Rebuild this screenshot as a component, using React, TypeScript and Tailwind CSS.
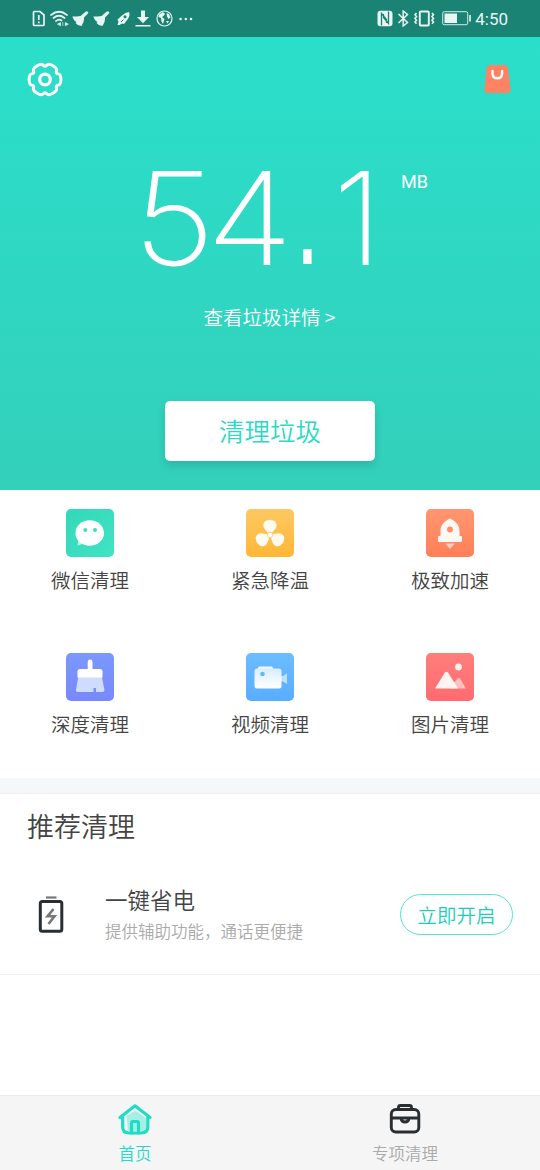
import React from 'react';

interface Tool {
    name: string;
    bg: string;
    icon: React.ReactNode;
}

const tools: Tool[] = [
    {
        name: '微信清理',
        bg: 'bg-linear-to-br from-[#31d9b8] to-[#41e3c4]',
        icon: (
            <>
                <path d="M12.500 29 L11.500 36.500 L20 34Z" fill="#b9f5e6" />
                <ellipse cx="23.700" cy="24" rx="14.300" ry="12.800" fill="#fff" />
                <circle cx="19.300" cy="21" r="2" fill="#3adfc0" />
                <circle cx="29" cy="21" r="2" fill="#3adfc0" />
            </>
        ),
    },
    {
        name: '紧急降温',
        bg: 'bg-linear-to-b from-[#fdc861] to-[#ffb733]',
        icon: (
            <>
                {[0, 120, 240].map((angle) => (
                    <path
                        key={angle}
                        d="M21.500 23.500 L18 19 C16.500 15.500 18 12 21 11.500 Q24 10.200 27 11.500 C30 12 31.500 15.500 30 19 L26.500 23.500Z"
                        fill="#fffaf0"
                        transform={`rotate(${angle} 24 26)`}
                    />
                ))}
                <circle cx="24" cy="26" r="2.700" fill="#fff" stroke="#fdd689" strokeWidth="1" />
            </>
        ),
    },
    {
        name: '极致加速',
        bg: 'bg-linear-to-b from-[#ff9671] to-[#ff7f58]',
        icon: (
            <>
                <path d="M19 34.500 H29 L24 40Z" fill="#ffcbb9" />
                <path
                    d="M24 9.500 C29.500 12 33.500 16 33.500 22 V27 H35 Q36 27 36 28 V32 Q36 33 35 33 H13 Q12 33 12 32 V28 Q12 27 13 27 H14.500 V22 C14.500 16 18.500 12 24 9.500Z"
                    fill="#fff7f2"
                />
                <circle cx="24" cy="20.500" r="2.900" fill="#ff8e69" />
            </>
        ),
    },
    {
        name: '深度清理',
        bg: 'bg-linear-to-b from-[#7b98fb] to-[#7888fd]',
        icon: (
            <>
                <rect x="21.700" y="6.500" width="4.800" height="14" rx="2.400" fill="#fff" />
                <path d="M12.500 22 H35.500 L38.500 37 Q38.500 39 36.500 39 H11.500 Q9.500 39 10 37Z" fill="#cfdcff" />
                <path d="M27.500 39 V35 H30 V39Z" fill="#7b8dfb" />
                <path d="M14 16 H34 Q36.500 16 36.500 18.500 V24.500 H11.500 V18.500 Q11.500 16 14 16Z" fill="#fff" />
            </>
        ),
    },
    {
        name: '视频清理',
        bg: 'bg-linear-to-b from-[#6bbdff] to-[#58adff]',
        icon: (
            <>
                <defs>
                    <linearGradient id="camera" x1="0" y1="0" x2="0" y2="1">
                        <stop offset="0" stopColor="#d8edff" />
                        <stop offset="1" stopColor="#fff" />
                    </linearGradient>
                </defs>
                <rect x="12" y="13.500" width="15" height="4" rx="1.500" fill="#f1f9ff" />
                <path d="M33 23 H37 L41 20.500 V31 L37 28.500 H33Z" fill="#c0e1ff" />
                <rect x="8.500" y="15.500" width="27" height="20" rx="2.500" fill="url(#camera)" />
                <circle cx="16.500" cy="21" r="2.300" fill="#66b6fc" />
            </>
        ),
    },
    {
        name: '图片清理',
        bg: 'bg-linear-to-b from-[#ff7e7c] to-[#ff6b70]',
        icon: (
            <>
                <circle cx="32.500" cy="14" r="3.400" fill="#fff2ed" />
                <path d="M23 35.500 L32 25 Q33 24.300 34 25.200 L40 35.500Z" fill="#ffc1bd" />
                <path d="M9 35.500 L19 19.500 Q20.500 18 22 19.500 L32 35.500Z" fill="#fff4f1" />
            </>
        ),
    },
];

// Six rounded teeth, smoothed through the midpoints of the control points
const gearPath = (() => {
    const points = [0, 60, 120, 180, 240, 300]
        .flatMap((a) => [[a - 18, 16.7], [a + 18, 16.7], [a + 30, 12.2]])
        .map(([deg, r]) => [r * Math.cos((deg * Math.PI) / 180), r * Math.sin((deg * Math.PI) / 180)]);
    const mid = (i: number) => {
        const a = points[i % points.length];
        const b = points[(i + 1) % points.length];
        return `${((a[0] + b[0]) / 2).toFixed(2)} ${((a[1] + b[1]) / 2).toFixed(2)}`;
    };
    return `M${mid(points.length - 1)} ${points
        .map((p, i) => `Q${p[0].toFixed(2)} ${p[1].toFixed(2)} ${mid(i)}`)
        .join(' ')}Z`;
})();

const Broom = () => (
    <svg width="17" height="16" viewBox="0 0 17 16" fill="#e5f5f1">
        <path d="M.300 5.500 Q5 5.500 8.500 5 L13.500 .800 Q15 -.300 16 .800 Q16.800 1.800 15.500 3 L12 6.500 Q12.500 11 9.500 15 Q5.500 14.800 3.500 12 L4.500 11.200 Q1.500 9.500 .300 5.500Z" />
    </svg>
);

const StatusBar = () => (
    <div className="flex h-[37px] items-center justify-between bg-[#1b8374] pr-[32px] pl-[32px] text-[#e7f6f3]">
        <div className="flex items-center">
            <svg width="14" height="17" viewBox="0 0 14 17" fill="none" stroke="currentColor" strokeWidth="1.700">
                <path d="M1.500 2.500 Q1.500 1.500 2.500 1.500 H8 L12 5 V14.500 Q12 15.500 11 15.500 H2.500 Q1.500 15.500 1.500 14.500Z" />
                <path d="M6.800 5 V10 M6.800 11.500 V13.300" />
            </svg>
            <svg className="ml-1" width="19" height="17" viewBox="0 0 19 17" fill="none" stroke="currentColor" strokeWidth="1.700" strokeLinecap="round">
                <path d="M1 5 Q9 -1.500 17 5 M3.500 8 Q9 3.500 14.500 8 M6 11 Q9 8.500 11.500 10.500" />
                <path d="M7.800 14 L10.500 12.600 V15.400Z M18 14 L15.300 12.600 V15.400Z M12.800 12.500 V15.500" fill="currentColor" strokeWidth=".7" />
            </svg>
            <div className="ml-[3px] flex gap-1">
                <Broom />
                <Broom />
            </div>
            <svg className="ml-1.5" width="15" height="15" viewBox="0 0 15 15">
                <path d="M1.500 14 L2.500 10.500 L1.500 8.500 L6 4.500 Q9.500 1 13 1 Q14.500 4.500 11.500 8.500 L8 13 L6 12.500 L3.500 14Z" fill="currentColor" />
                <circle cx="9" cy="5.700" r="1.500" fill="#1b8374" />
                <path d="M7.500 8.500 L5 11" stroke="#1b8374" />
            </svg>
            <svg className="ml-1" width="16" height="17" viewBox="0 0 16 17" fill="currentColor">
                <path d="M6 .500 H10 V7 H14 L8 13.200 L2 7 H6Z M.500 15 H15.500 V16.500 H.500Z" />
            </svg>
            <svg className="ml-[5px]" width="17" height="17" viewBox="0 0 17 17">
                <circle cx="8.500" cy="8.500" r="7.500" fill="none" stroke="currentColor" strokeWidth="1.200" />
                <path d="M3 4.500 L7 2 L9 4 L7.500 6 L6 7 L8.500 9 L7.500 12 L7 14 L5.500 11.500 L5 8 L2.500 7Z M10.500 3 L13 4 L14.500 7.500 L12.500 9 L11 6.500Z M10 11 L13 11 L11.500 13.500Z" fill="currentColor" />
            </svg>
            <svg className="ml-1.5" width="14" height="4" viewBox="0 0 14 4" fill="currentColor">
                <circle cx="1.600" cy="2" r="1.300" />
                <circle cx="6.800" cy="2" r="1.300" />
                <circle cx="12" cy="2" r="1.300" />
            </svg>
        </div>
        <div className="flex items-center">
            <svg width="16" height="17" viewBox="0 0 16 17">
                <rect x=".5" y=".7" width="15" height="15.600" rx="3" fill="currentColor" />
                <path d="M4.500 15.500 V3.500 L9.500 9.500 V13 M11.500 1.500 V13.500 L6.500 7.500 V4" fill="none" stroke="#1b8374" strokeWidth="1.300" />
            </svg>
            <svg className="ml-1" width="13" height="17" viewBox="0 0 13 17" fill="none" stroke="currentColor" strokeWidth="1.500">
                <path d="M1.500 4 L10.500 12.500 L6.200 16 V1 L10.500 4.500 L1.500 13" />
            </svg>
            <svg className="ml-1" width="21" height="17" viewBox="0 0 21 17" fill="none" stroke="currentColor" strokeWidth="1.900">
                <rect x="5.800" y="1.500" width="9" height="14" rx="1" />
                <path d="M2.500 3 L1 4.800 L2.500 6.600 L1 8.400 L2.500 10.200 L1 12 L2.500 13.800 M18 3 L19.500 4.800 L18 6.600 L19.500 8.400 L18 10.200 L19.500 12 L18 13.800" strokeWidth="1.600" />
            </svg>
            <svg className="ml-[7px]" width="29" height="15" viewBox="0 0 29 15">
                <rect x=".7" y=".7" width="25" height="13" rx="1.500" fill="none" stroke="currentColor" strokeWidth=".9" />
                <rect x="2.500" y="2.500" width="12.500" height="9.500" fill="currentColor" />
                <path d="M28 4 V10.500" stroke="currentColor" strokeWidth="1.600" />
            </svg>
            <span className="ml-[4px] pt-px font-[Roboto] text-[17px] leading-none font-normal">4:50</span>
        </div>
    </div>
);

const Hero = () => (
    <div className="flex h-[453px] flex-col items-center bg-linear-to-b from-[#2adfca] to-[#33d0bb] text-white">
        <div className="flex h-[84px] w-full items-center justify-between px-[27px]">
            <svg width="36" height="36" viewBox="-18 -18.5 36 36" fill="none" stroke="currentColor">
                <path d={gearPath} strokeWidth="3" />
                <circle r="5.300" strokeWidth="3.200" />
            </svg>
            <svg className="mr-[2px]" width="27" height="28" viewBox="0 0 27 28">
                <path d="M6 0 H20.500 Q23.500 0 24 3.500 L26.500 24.500 Q26.800 28 23.500 28 H3.500 Q.200 28 .500 24.500 L2.500 3.500 Q3 0 6 0Z" fill="#ff8262" />
                <path d="M8.500 6 V8.500 Q8.500 13.300 13.300 13.300 Q18.100 13.300 18.100 8.500 V6" fill="none" stroke="#fff" strokeWidth="2.400" strokeLinecap="round" />
            </svg>
        </div>
        <div className="mt-[32px] flex h-[130px] w-full items-start pl-[133px]">
            <div className="flex items-baseline font-[Inter] text-[129px] leading-[130px] font-extralight">
                <span className="w-[161px] origin-left scale-x-[1.1]">
                    <span className="tracking-[-8px]">54</span>
                </span>
                <span className="w-[32px] origin-[50%_74.5px] scale-y-[1.6] pr-[5px] text-center font-['Liberation_Sans'] text-[86px] leading-none font-normal">.</span>
                <span className="w-[63px] text-center">1</span>
            </div>
            <span className="mt-[17px] ml-[12px] font-[Roboto] text-[18px] leading-6 font-normal">MB</span>
        </div>
        <div className="mt-[20px] mr-px text-[19.5px] leading-7">查看垃圾详情 &gt;</div>
        <button className="mt-[70px] h-[60px] w-[210px] rounded-[5px] bg-white pb-[2px] text-[25.5px] text-[#2bd9c5] shadow-[0_5px_9px_rgba(0,80,70,0.18)]">
            清理垃圾
        </button>
    </div>
);

const TabBar = () => (
    <div className="mt-[120px] grid h-[75px] grid-cols-2 border-t border-[#ebebeb] bg-[#f5f5f5] pt-[7px] text-[16.5px] leading-6">
        <div className="flex flex-col items-center text-[#1edcc5]">
            <svg width="36" height="32" viewBox="0 0 36 32" fill="none" stroke="currentColor" strokeWidth="3.200" strokeLinecap="round" strokeLinejoin="round">
                <path d="M9.500 13.500 L18 7.500 L29 15 V28 H11Z" fill="#a6efe4" stroke="none" />
                <path d="M3 14.500 L18 2.800 L33 14.500 M5.700 14 V24 Q5.700 30 12 30 H24 Q30.800 30 30.800 24 V14" />
                <path d="M14.500 30 V20 Q14.500 18.500 16 18.500 H20 Q21.500 18.500 21.500 20 V30" />
            </svg>
            <span className="mt-[6px]">首页</span>
        </div>
        <div className="flex flex-col items-center text-[#aaa]">
            <svg width="32" height="32" viewBox="0 0 32 32" fill="none" stroke="#292e32" strokeWidth="2.900" strokeLinejoin="round">
                <rect x="2.300" y="6.500" width="27.500" height="22.500" rx="4.500" />
                <path d="M9.500 6 V4.500 Q9.500 2.500 11.500 2.500 H20.500 Q22.500 2.500 22.500 4.500 V6 M2.500 15 H29.500 M12 15 Q12.500 19 16 19 Q19.500 19 20 15" />
            </svg>
            <span className="mt-[6px]">专项清理</span>
        </div>
    </div>
);

export default function App() {
    return (
        <div className="flex h-[1170px] w-[540px] flex-col overflow-hidden bg-white font-['Noto_Sans_CJK_SC',sans-serif] font-[350] text-[#444]">
            <StatusBar />
            <Hero />
            <div className="grid h-[288px] grid-cols-3 grid-rows-2">
                {tools.map((tool) => (
                    <div key={tool.name} className="flex flex-col items-center pt-[19px]">
                        <div className={`size-12 overflow-hidden rounded-[5px] ${tool.bg}`}>
                            <svg width="48" height="48" viewBox="0 0 48 48">
                                {tool.icon}
                            </svg>
                        </div>
                        <span className="mt-[9px] text-[19.5px] leading-7">{tool.name}</span>
                    </div>
                ))}
            </div>
            <div className="h-4 shrink-0 border-b border-[#eee] bg-[#f6f7f9]" />
            <div className="h-[181px] shrink-0 border-b border-[#ededed] px-[27px] pt-[12px]">
                <h2 className="text-[27px] leading-10">推荐清理</h2>
                <div className="mt-[36px] flex items-center">
                    <svg className="ml-[10px]" width="28" height="40" viewBox="0 0 28 40" fill="none">
                        <path d="M9 2.500 H19.500" stroke="#777" strokeWidth="2.200" />
                        <rect x="3.300" y="6.500" width="21.500" height="29.800" rx="2" stroke="#292e32" strokeWidth="3" />
                        <path d="M16.500 14 L10.500 21.300 H17.500 L11.500 29" stroke="#777" strokeWidth="2.600" />
                    </svg>
                    <div className="ml-[40px] pt-px">
                        <div className="text-[22.5px] leading-8">一键省电</div>
                        <div className="text-[16.5px] leading-8 text-[#aaa]">提供辅助功能，通话更便捷</div>
                    </div>
                    <button className="ml-auto h-[41px] w-[113px] rounded-full border border-[#55e3d2] text-[19.5px] text-[#1bcfb7]">
                        立即开启
                    </button>
                </div>
            </div>
            <TabBar />
        </div>
    );
}
